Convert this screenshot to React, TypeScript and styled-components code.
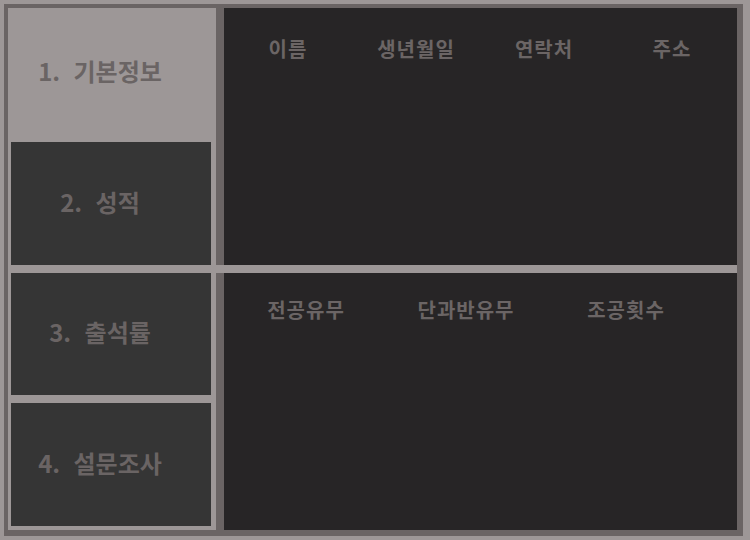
import React from 'react';
import styled, { createGlobalStyle } from 'styled-components';

const GlobalStyle = createGlobalStyle`
  html, body { margin: 0; padding: 0; background: #9d9797; }
  body { font-family: "Noto Sans CJK KR", "Noto Sans", sans-serif; }
  * { box-sizing: border-box; }
`;

const Frame = styled.div`
  margin: 4px 0 0 4px;
  width: 739px;
  height: 532px;
  border-style: solid;
  border-color: #6a6464;
  border-width: 4px 6px 6px 4px;
  background: #9d9797;
  display: flex;
`;

const Sidebar = styled.nav`
  width: 208px;
  padding: 3px 5px 4px 3px;
  display: grid;
  grid-template-rows: repeat(4, 1fr);
  gap: 8px;
`;

const MenuItem = styled.div<{ $active?: boolean }>`
  display: flex;
  align-items: center;
  justify-content: center;
  padding-right: 22px;
  padding-bottom: 3px;
  background: ${(p) => (p.$active ? '#9d9797' : '#353535')};
  color: #6a6464;
  font-size: 24px;
  font-weight: 700;
  word-spacing: 8px;
  line-height: 1;
`;

const Content = styled.main`
  flex: 1;
  display: grid;
  grid-template-rows: 1fr 1fr;
  gap: 8px;
`;

const Panel = styled.section<{ $top: number }>`
  background: #272526;
  border-left: 8px solid #6a6464;
  padding-top: ${(p) => p.$top}px;
`;

const HeaderRow = styled.div<{ $cols: number; $colWidth: number; $offset: number }>`
  display: grid;
  grid-template-columns: repeat(${(p) => p.$cols}, ${(p) => p.$colWidth}px);
  padding-left: ${(p) => p.$offset}px;
`;

const HeaderCell = styled.div`
  text-align: center;
  color: #6b6565;
  font-size: 20px;
  font-weight: 700;
  letter-spacing: 1px;
  line-height: 24px;
`;

const menu = ['1. 기본정보', '2. 성적', '3. 출석률', '4. 설문조사'];
const topHeaders = ['이름', '생년월일', '연락처', '주소'];
const bottomHeaders = ['전공유무', '단과반유무', '조공횟수'];

export default function App() {
  return (
    <>
      <GlobalStyle />
      <Frame>
        <Sidebar>
          {menu.map((m, i) => (
            <MenuItem key={m} $active={i === 0}>
              {m}
            </MenuItem>
          ))}
        </Sidebar>
        <Content>
          <Panel $top={29}>
            <HeaderRow $cols={4} $colWidth={128} $offset={0}>
              {topHeaders.map((h) => (
                <HeaderCell key={h}>{h}</HeaderCell>
              ))}
            </HeaderRow>
          </Panel>
          <Panel $top={25}>
            <HeaderRow $cols={3} $colWidth={160} $offset={2}>
              {bottomHeaders.map((h) => (
                <HeaderCell key={h}>{h}</HeaderCell>
              ))}
            </HeaderRow>
          </Panel>
        </Content>
      </Frame>
    </>
  );
}
